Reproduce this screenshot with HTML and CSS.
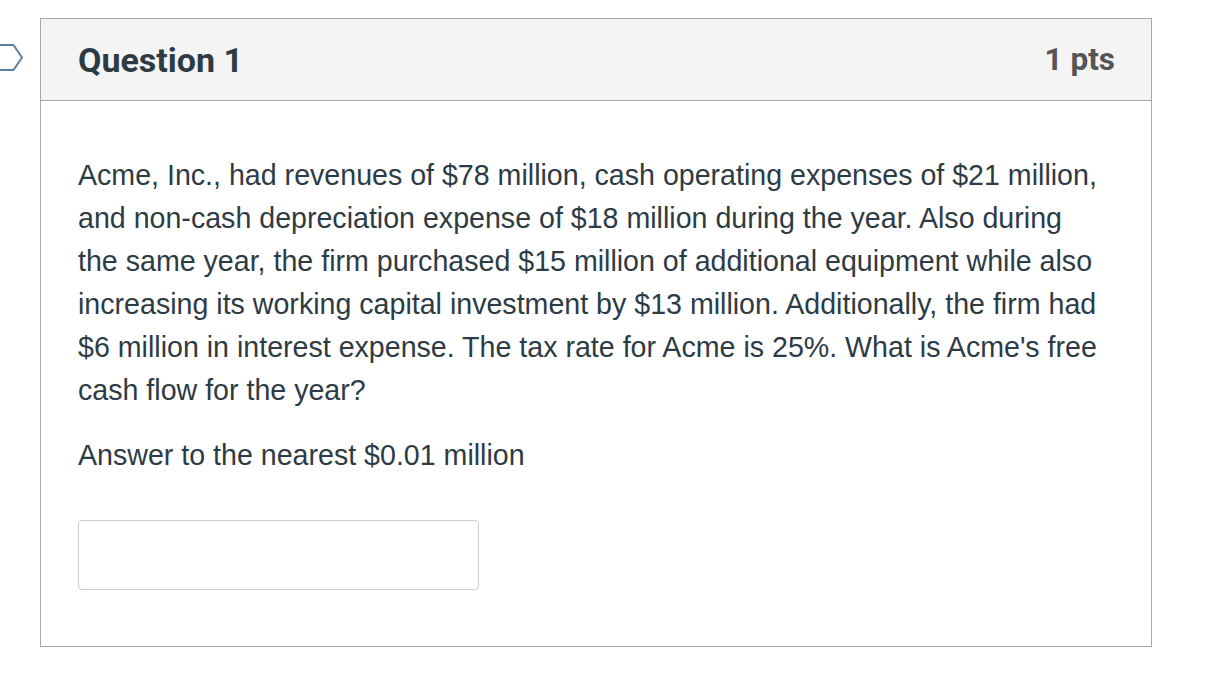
FILE: index.html
```html
<!DOCTYPE html>
<html lang="en">
<head>
<meta charset="utf-8">
<title>Question 1</title>
<link rel="stylesheet" href="styles.css">
</head>
<body>
<div class="page">
  <div class="flag">
    <svg width="24" height="30" viewBox="0 0 24 30">
      <path d="M-4 2 H13.5 L22 14.5 L13.5 27 H-4" fill="none" stroke="#5b7f9c" stroke-width="2" stroke-linejoin="round"/>
    </svg>
  </div>
  <div class="question">
    <div class="q-header">
      <h2 class="q-title">Question 1</h2>
      <span class="q-points">1 pts</span>
    </div>
    <div class="q-body">
      <p class="q-text">Acme, Inc., had revenues of $78 million, cash operating expenses of $21 million, and non-cash depreciation expense of $18 million during the year. Also during the same year, the firm purchased $15 million of additional equipment while also increasing its working capital investment by $13 million. Additionally, the firm had $6 million in interest expense. The tax rate for Acme is 25%. What is Acme's free cash flow for the year?</p>
      <p class="q-text">Answer to the nearest $0.01 million</p>
      <input class="q-input" type="text" aria-label="Answer">
    </div>
  </div>
</div>
</body>
</html>
```
FILE: styles.css
```css
html, body {
  margin: 0;
  padding: 0;
  background: #ffffff;
}
.page {
  position: relative;
  padding: 18px 0 0 40px;
}
.flag {
  position: absolute;
  left: 0;
  top: 43px;
  width: 24px;
  height: 30px;
}
.flag svg {
  display: block;
}
.question {
  box-sizing: border-box;
  width: 1112px;
  border: 1px solid #a8a8a8;
}
.q-header {
  display: flex;
  align-items: center;
  justify-content: space-between;
  height: 81px;
  padding: 0 36px 0 37px;
  background: #f4f4f4;
  border-bottom: 1px solid #a8a8a8;
}
.q-title {
  margin: 0;
  font-family: Roboto, "Liberation Sans", sans-serif;
  font-weight: 700;
  font-size: 34px;
  color: #2d3b45;
}
.q-points {
  font-family: Roboto, "Liberation Sans", sans-serif;
  font-weight: 700;
  font-size: 31.5px;
  color: #555555;
}
.q-body {
  padding: 53px 44px 56px 37px;
}
.q-text {
  margin: 0 0 22px 0;
  font-family: "Liberation Sans", Arial, sans-serif;
  font-size: 28.6px;
  line-height: 43px;
  color: #2d3b45;
}
.q-input {
  display: block;
  margin-top: 43px;
  width: 401px;
  height: 70px;
  box-sizing: border-box;
  border: 1px solid #cccccc;
  border-radius: 4px;
  background: #ffffff;
  padding: 0 12px;
  font-size: 24px;
}
```
